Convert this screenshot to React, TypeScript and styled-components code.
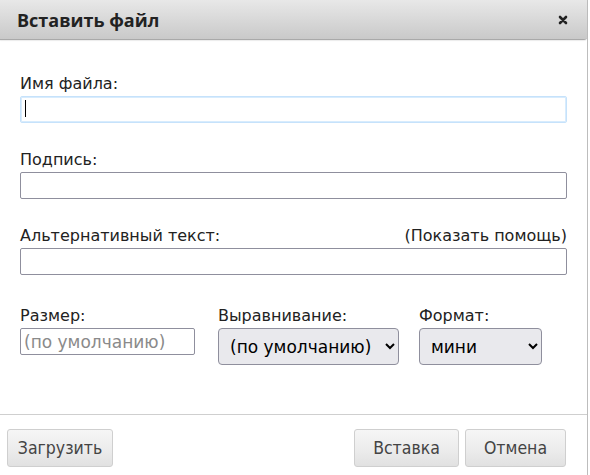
import React from "react";
import styled, { createGlobalStyle } from "styled-components";

const GlobalStyle = createGlobalStyle`
  html, body {
    margin: 0;
    padding: 0;
    background: #fff;
  }
  body {
    font-family: "DejaVu Sans", Verdana, sans-serif;
    color: #222;
  }
`;

const Dialog = styled.div`
  width: 588px;
  height: 475px;
  display: flex;
  flex-direction: column;
  background: #fff;
  border-right: 1px solid #bdbdbd;
  box-sizing: border-box;
`;

const TitleBar = styled.div`
  height: 40px;
  box-sizing: border-box;
  display: flex;
  align-items: center;
  justify-content: space-between;
  padding: 0 19px 0 17px;
  background: linear-gradient(to bottom, #e8e8e8 0%, #c9c9c9 100%);
  border-bottom: 1px solid #a9a9a9;
  border-bottom-right-radius: 3px;
  box-shadow: 0 1px 1px rgba(0, 0, 0, 0.08);
`;

const Title = styled.h1`
  margin: 0;
  font-family: "Open Sans", "Noto Sans", sans-serif;
  font-size: 18px;
  font-weight: 700;
  color: #222;
`;

const Close = styled.button`
  border: 0;
  background: none;
  padding: 0;
  width: 10px;
  height: 10px;
  display: flex;
  align-items: center;
  justify-content: center;
  cursor: pointer;
`;

const Body = styled.div`
  flex: 1;
  padding: 33px 20px 0 20px;
  display: flex;
  flex-direction: column;
  gap: 26px;
`;

const Field = styled.div`
  display: flex;
  flex-direction: column;
`;

const LabelRow = styled.div`
  display: flex;
  justify-content: space-between;
  align-items: baseline;
  height: 22px;
  font-size: 16px;
  color: #222;
  line-height: 22px;
`;

const HelpLink = styled.span`
  color: #222;
  cursor: pointer;
`;

const TextInput = styled.input<{ $focused?: boolean; $width?: number }>`
  box-sizing: border-box;
  width: ${(p) => (p.$width ? `${p.$width}px` : "100%")};
  height: 27px;
  margin-top: 1px;
  border: 1px solid ${(p) => (p.$focused ? "#c6e2fb" : "#8f8f9d")};
  border-radius: 2px;
  padding: 2px 3px;
  font-family: inherit;
  font-size: 17px;
  color: #222;
  outline: none;
  ${(p) => (p.$focused ? "box-shadow: inset 0 0 0 1px #d8ecfd;" : "")}

  &::placeholder {
    color: #8a8a8a;
  }
`;

const Caret = styled.span`
  position: absolute;
  left: 5px;
  top: 5px;
  width: 1px;
  height: 17px;
  background: #000;
`;

const FocusWrap = styled.div`
  position: relative;
`;

const Row = styled.div`
  display: flex;
  margin-top: 4px;
`;

const RowField = styled(Field)<{ $gap: number }>`
  margin-right: ${(p) => p.$gap}px;
`;

const Select = styled.select<{ $width: number }>`
  box-sizing: border-box;
  width: ${(p) => p.$width}px;
  height: 37px;
  margin-top: 1px;
  font-family: inherit;
  font-size: 17px;
  color: #000;
  padding: 0 7px;
  border: 1px solid #8f8f9d;
  border-radius: 4px;
  background: #e9e9ed;
`;

const Footer = styled.div`
  border-top: 1px solid #cfcfcf;
  height: 61px;
  box-sizing: border-box;
  display: flex;
  align-items: flex-start;
  justify-content: space-between;
  padding: 14px 21px 0 7px;
`;

const ButtonGroup = styled.div`
  display: flex;
  gap: 6px;
`;

const Button = styled.button<{ $width: number }>`
  width: ${(p) => p.$width}px;
  height: 38px;
  box-sizing: border-box;
  border: 1px solid #cfcfcf;
  border-radius: 3px;
  background: linear-gradient(to bottom, #f6f6f6 0%, #ececec 55%, #e1e1e1 100%);
  font-family: "DejaVu Sans Condensed", "DejaVu Sans", sans-serif;
  font-size: 17.5px;
  color: #444;
  cursor: pointer;
  padding: 0;
`;

export default function App() {
  return (
    <>
      <GlobalStyle />
      <Dialog>
        <TitleBar>
          <Title>Вставить файл</Title>
          <Close aria-label="Закрыть">
            <svg width="10" height="10" viewBox="0 0 10 10">
              <path d="M2 2 L8 8 M8 2 L2 8" stroke="#222" strokeWidth="2.6" strokeLinecap="round" />
            </svg>
          </Close>
        </TitleBar>
        <Body>
          <Field>
            <LabelRow>Имя файла:</LabelRow>
            <FocusWrap>
              <TextInput $focused />
              <Caret />
            </FocusWrap>
          </Field>
          <Field>
            <LabelRow>Подпись:</LabelRow>
            <TextInput />
          </Field>
          <Field>
            <LabelRow>
              <span>Альтернативный текст:</span>
              <HelpLink>(Показать помощь)</HelpLink>
            </LabelRow>
            <TextInput />
          </Field>
          <Row>
            <RowField $gap={23}>
              <LabelRow>Размер:</LabelRow>
              <TextInput $width={175} placeholder="(по умолчанию)" />
            </RowField>
            <RowField $gap={20}>
              <LabelRow>Выравнивание:</LabelRow>
              <Select $width={181} defaultValue="default">
                <option value="default">(по умолчанию)</option>
              </Select>
            </RowField>
            <RowField $gap={0}>
              <LabelRow>Формат:</LabelRow>
              <Select $width={123} defaultValue="mini">
                <option value="mini">мини</option>
              </Select>
            </RowField>
          </Row>
        </Body>
        <Footer>
          <Button $width={106}>Загрузить</Button>
          <ButtonGroup>
            <Button $width={105}>Вставка</Button>
            <Button $width={101}>Отмена</Button>
          </ButtonGroup>
        </Footer>
      </Dialog>
    </>
  );
}
